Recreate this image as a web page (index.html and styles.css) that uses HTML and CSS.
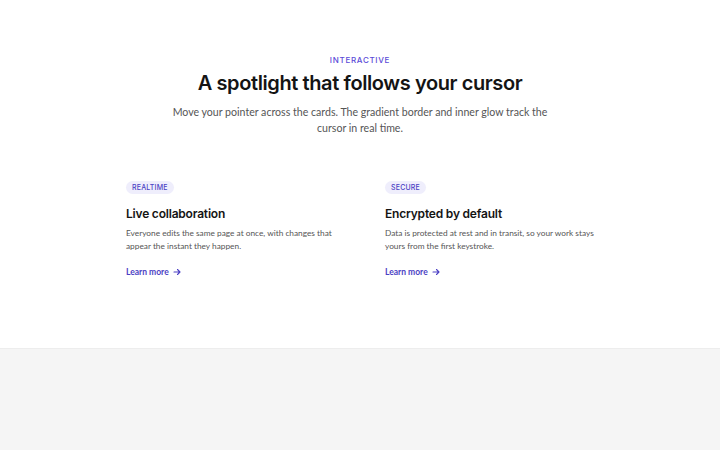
FILE: index.html
```html
<!doctype html>
<html lang="en">
<head>
    <meta charset="UTF-8">
    <meta name="viewport" content="width=device-width, initial-scale=1.0">
    <title>Spotlight cards</title>
    <link rel="stylesheet" href="styles.css">
</head>
<body>
<section class="demo">
    <header class="intro">
        <p class="eyebrow">INTERACTIVE</p>
        <h1>A spotlight that follows your cursor</h1>
        <p class="lead">Move your pointer across the cards. The gradient border and inner glow track the cursor in real time.</p>
    </header>

    <div class="cards">
        <article class="card">
            <span class="badge">REALTIME</span>
            <h3>Live collaboration</h3>
            <p>Everyone edits the same page at once, with changes that appear the instant they happen.</p>
            <a class="more" href="#">Learn more
                <svg width="8" height="8" viewBox="0 0 16 16" fill="none" stroke="currentColor" stroke-width="2.2" stroke-linecap="round" stroke-linejoin="round"><path d="M2 8h12M9 3l5 5-5 5"/></svg>
            </a>
        </article>
        <article class="card">
            <span class="badge">SECURE</span>
            <h3>Encrypted by default</h3>
            <p>Data is protected at rest and in transit, so your work stays yours from the first keystroke.</p>
            <a class="more" href="#">Learn more
                <svg width="8" height="8" viewBox="0 0 16 16" fill="none" stroke="currentColor" stroke-width="2.2" stroke-linecap="round" stroke-linejoin="round"><path d="M2 8h12M9 3l5 5-5 5"/></svg>
            </a>
        </article>
    </div>
</section>
</body>
</html>
```

FILE: styles.css
```css
body{
    margin: 0;
    background: #f5f5f5;
    font-family: Inter, "Noto Sans", sans-serif;
    color: #141414;
}
.demo{
    background: #fff;
    height: 349px;
    box-sizing: border-box;
    border-bottom: 1px solid #ededed;
    padding-top: 55px;
}
.intro{
    text-align: center;
}
.eyebrow{
    margin: 0;
    font-size: 8px;
    font-weight: 500;
    letter-spacing: 0.7px;
    color: #5b4bd8;
}
h1{
    margin: 3px 0 0;
    font-size: 20px;
    font-weight: 600;
    letter-spacing: -0.4px;
    line-height: 30px;
}
.lead{
    margin: 6px auto 0;
    width: 390px;
    font-family: Lato, sans-serif;
    font-size: 10.6px;
    line-height: 16px;
    color: #555;
}
.cards{
    display: grid;
    grid-template-columns: 1fr 1fr;
    gap: 8px;
    width: 510px;
    margin: 27px auto 0;
}
.card{
    border: 1px solid transparent;
    border-radius: 14px;
    padding: 10px 12px 10px 20px;
}
.badge{
    display: inline-block;
    font-size: 7px;
    font-weight: 500;
    letter-spacing: 0.2px;
    color: #4b3fc4;
    background: #efeefc;
    border-radius: 8px;
    padding: 3px 6px;
    line-height: 7px;
}
.card h3{
    margin: 12px 0 0;
    font-size: 12px;
    font-weight: 600;
    letter-spacing: -0.2px;
    line-height: 16px;
}
.card p{
    margin: 5px 0 0;
    font-family: Lato, sans-serif;
    font-size: 8.3px;
    line-height: 13px;
    color: #555;
}
.more{
    display: inline-flex;
    align-items: center;
    gap: 4px;
    margin-top: 14px;
    font-family: Lato, sans-serif;
    font-size: 8.5px;
    font-weight: 700;
    color: #4b3fc4;
    text-decoration: none;
}
```
